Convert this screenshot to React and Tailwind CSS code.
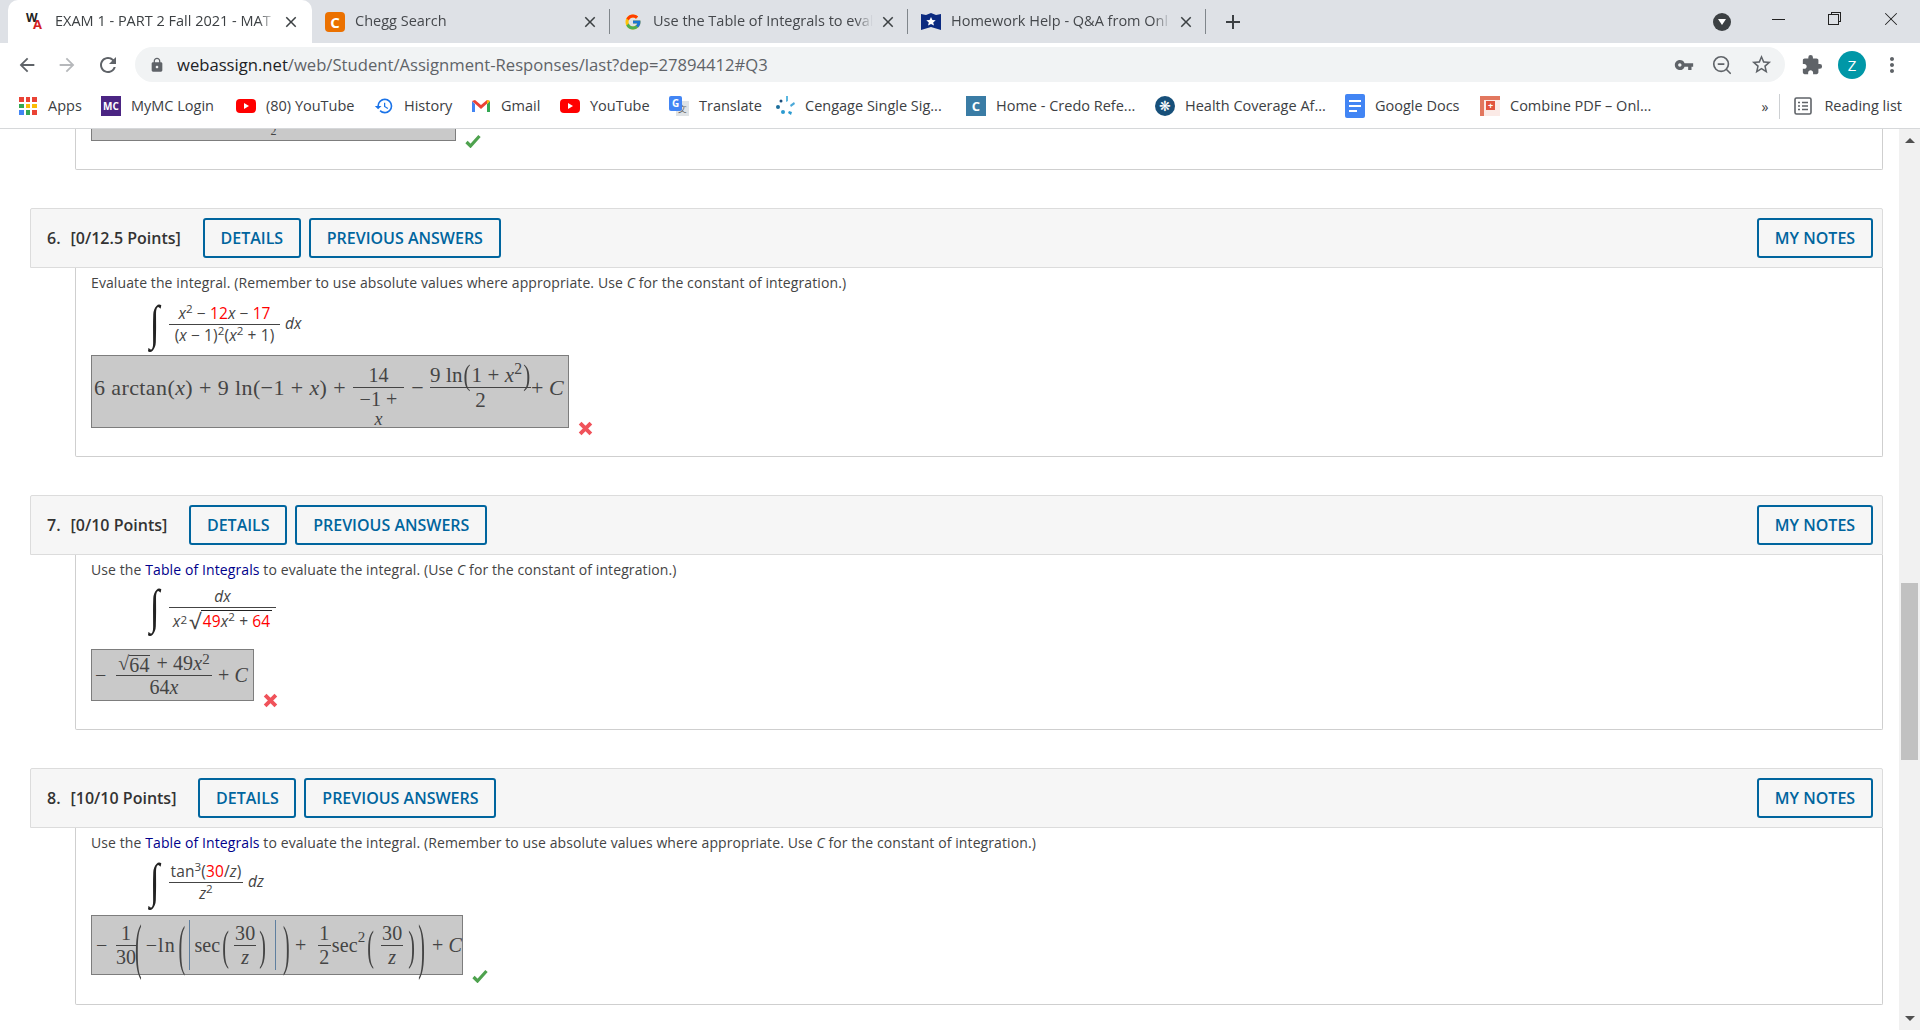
import { X, ZoomOut } from 'lucide-react';
import { FcGoogle } from 'react-icons/fc';
import {
  MdAdd,
  MdArrowBack,
  MdArrowForward,
  MdClose,
  MdExtension,
  MdHistory,
  MdLock,
  MdMoreVert,
  MdOutlineStarBorder,
  MdRefresh,
  MdVpnKey,
} from 'react-icons/md';

const YouTubeIcon = () => (
  <svg viewBox="0 0 20 20" className="w-5 h-5">
    <rect x="0" y="3" width="20" height="14" rx="4" fill="#ff0000" />
    <path d="M8 7l5 3-5 3z" fill="#fff" />
  </svg>
);

const AppsIcon = () => (
  <div className="w-[18px] h-[18px] grid grid-cols-3 gap-[2px]">
    {['#ea4335', '#ea4335', '#ea4335', '#34a853', '#fbbc04', '#fbbc04', '#4285f4', '#34a853', '#ea4335'].map((c, i) => (
      <span key={i} style={{ background: c }} />
    ))}
  </div>
);

const GmailIcon = () => (
  <svg viewBox="0 0 20 20" className="w-5 h-5">
    <path d="M1 5v11h3V8z" fill="#4285f4" />
    <path d="M19 5v11h-3V8z" fill="#34a853" />
    <path d="M1 5l3-1 6 5 6-5 3 1-9 8z" fill="#ea4335" />
    <path d="M16 4l3 1-3 3z" fill="#fbbc04" />
  </svg>
);

const TranslateIcon = () => (
  <div className="relative w-5 h-5">
    <div className="absolute right-0 bottom-0 w-[13px] h-[15px] bg-[#dfe3e6] text-[9px] leading-[15px] text-center text-[#666]">文</div>
    <div className="absolute left-0 top-0 w-[13px] h-[15px] bg-[#4285f4] rounded-[2px] text-[10px] font-bold leading-[15px] text-center text-white">G</div>
  </div>
);

const CengageIcon = () => (
  <svg viewBox="0 0 20 20" className="w-5 h-5">
    <circle cx="3" cy="11" r="2" fill="#1d6f9c" />
    <circle cx="6" cy="5" r="1.5" fill="#1d4f7c" />
    <path d="M11 0l2 0 0 5-2 1z" fill="#5bb7e0" />
    <path d="M15 9l4-3 1 2-4 3z" fill="#4aa8d8" />
    <path d="M14 15l3 1-1 3-3-2z" fill="#2b9ad0" />
    <circle cx="8" cy="16" r="2" fill="#2b9ad0" />
  </svg>
);

const CredoIcon = () => (
  <div className="w-5 h-5 bg-[#3a7ca5] text-white text-[13px] font-bold leading-5 text-center">C</div>
);

const HealthIcon = () => (
  <div className="w-5 h-5 rounded-full bg-[#17507a] text-white text-[14px] leading-5 text-center">❋</div>
);

const DocsIcon = () => (
  <div className="w-5 h-6 bg-[#4285f4] rounded-[2px] flex flex-col justify-center gap-[3px] px-1">
    <span className="h-[2px] bg-white" />
    <span className="h-[2px] bg-white" />
    <span className="h-[2px] w-2 bg-white" />
  </div>
);

const PdfIcon = () => (
  <div className="relative w-5 h-5 bg-[#fbeae6] border-l-[4px] border-t-[4px] border-[#e2775f]">
    <div className="w-[9px] h-[9px] mt-[1px] ml-[2px] bg-[#e2553f] text-white text-[9px] font-bold leading-[9px] text-center">+</div>
  </div>
);

const ReadingIcon = () => (
  <svg viewBox="0 0 18 18" className="w-[18px] h-[18px]" fill="none" stroke="#5f6368" strokeWidth="1.6">
    <rect x="1" y="1" width="16" height="16" rx="1.5" />
    <path d="M4 5.5h2M8 5.5h6M4 9h2M8 9h6M4 12.5h2M8 12.5h6" />
  </svg>
);

const bookmarks = [
  { icon: <AppsIcon />, label: 'Apps', w: 'w-[33px]' },
  { icon: <div className="w-5 h-5 bg-[#4b2583] text-white text-[10px] font-bold leading-5 text-center">MC</div>, label: 'MyMC Login', w: 'w-[85px]' },
  { icon: <YouTubeIcon />, label: '(80) YouTube', w: 'w-[88px]' },
  { icon: <MdHistory className="w-5 h-5 text-[#1a73e8]" />, label: 'History', w: 'w-[47px]' },
  { icon: <GmailIcon />, label: 'Gmail', w: 'w-[39px]' },
  { icon: <YouTubeIcon />, label: 'YouTube', w: 'w-[59px]' },
  { icon: <TranslateIcon />, label: 'Translate', w: 'w-[56px]' },
  { icon: <CengageIcon />, label: 'Cengage Single Sig...', w: 'w-[141px]' },
  { icon: <CredoIcon />, label: 'Home - Credo Refe...', w: 'w-[139px]' },
  { icon: <HealthIcon />, label: 'Health Coverage Af...', w: 'w-[140px]' },
  { icon: <DocsIcon />, label: 'Google Docs', w: 'w-[85px]' },
  { icon: <PdfIcon />, label: 'Combine PDF – Onl...', w: 'w-[141px]' },
];

function Tab({ icon, title, active, sep }) {
  return (
    <div className={`relative h-[43px] flex items-center shrink-0 text-[14.5px] ${active ? 'w-[304px] pl-[18px] pr-[12px] bg-white rounded-t-[10px] text-[#3c4043]' : 'w-[298px] pl-[13px] pr-[11px] text-[#45484c]'}`}>
      <div className="w-5 h-5 shrink-0 flex items-center justify-center">{icon}</div>
      <div className={`flex-1 mb-[1px] whitespace-nowrap overflow-hidden [mask-image:linear-gradient(to_right,black_92%,transparent)] ${active ? 'ml-[9px]' : 'ml-[10px]'}`}>{title}</div>
      <MdClose className="w-[18px] h-[18px] ml-[6px] shrink-0 text-[#3c4043]" />
      {sep && <div className="absolute right-0 top-[9px] w-px h-[25px] bg-[#80868b]" />}
    </div>
  );
}

function TabBar() {
  return (
    <div className="h-[43px] bg-[#dee1e6] flex pl-2 overflow-hidden">
      <Tab
        active
        title="EXAM 1 - PART 2 Fall 2021 - MAT"
        icon={
          <div className="relative w-5 h-5 font-bold leading-none">
            <span className="absolute left-0 top-0 text-[12px] text-[#222]">W</span>
            <span className="absolute left-[7px] top-[6px] text-[13px] text-[#d3201f]">A</span>
          </div>
        }
      />
      <Tab
        sep
        title="Chegg Search"
        icon={<div className="w-5 h-5 rounded-[4px] bg-[#eb7100] text-white text-[15px] font-bold leading-5 text-center">C</div>}
      />
      <Tab sep title="Use the Table of Integrals to eval" icon={<FcGoogle className="w-[18px] h-[18px]" />} />
      <Tab
        sep
        title="Homework Help - Q&A from Onl"
        icon={
          <svg viewBox="0 0 20 20" className="w-5 h-5">
            <path d="M0 2l5 1 5-2 5 2 5-1v16l-10-3-10 3z" fill="#0b2a80" />
            <path d="M10 5l1.4 3 3.3.3-2.5 2.1.8 3.2-3-1.7-3 1.7.8-3.2-2.5-2.1 3.3-.3z" fill="#fff" />
          </svg>
        }
      />
      <div className="flex items-center ml-[15px]">
        <MdAdd className="w-[24px] h-[24px] text-[#3c4043]" />
      </div>
      <div className="flex-1" />
      <div className="flex items-center">
        <div className="w-[18px] h-[18px] mt-[1px] rounded-full bg-[#3c4043] flex items-center justify-center">
          <div className="w-0 h-0 border-x-[4px] border-x-transparent border-t-[6px] border-t-white" />
        </div>
        <div className="w-[56px] h-[43px] ml-[19px] flex items-center justify-center">
          <div className="w-[13px] h-px mb-[4px] bg-[#222]" />
        </div>
        <div className="w-[56px] h-[43px] flex items-center justify-center">
          <div className="relative w-[13px] h-[13px] mb-[6px]">
            <div className="absolute left-[3px] top-0 w-[10px] h-[10px] border border-[#222]" />
            <div className="absolute left-0 top-[2px] w-[11px] h-[11px] border border-[#222] bg-[#dee1e6]" />
          </div>
        </div>
        <div className="w-[58px] h-[43px] flex items-center justify-center">
          <X className="w-[22px] h-[22px] mb-[6px] text-[#222]" strokeWidth={1.1} />
        </div>
      </div>
    </div>
  );
}

function Toolbar() {
  return (
    <div className="h-[43px] bg-white flex items-center">
      <MdArrowBack className="w-[22px] h-[22px] ml-[16px] text-[#5f6368]" />
      <MdArrowForward className="w-[22px] h-[22px] ml-[18px] text-[#b6b8bb]" />
      <MdRefresh className="w-[24px] h-[24px] ml-[18px] text-[#5f6368]" />
      <div className="w-[1650px] h-[35px] ml-[15px] pl-[14px] pr-[12px] rounded-full bg-[#f1f3f4] flex items-center text-[16.65px]">
        <MdLock className="w-[16px] h-[16px] text-[#5f6368]" />
        <div className="ml-[12px] mt-[1px] whitespace-nowrap text-[#5f6368]">
          <span className="text-[#202124]">webassign.net</span>/web/Student/Assignment-Responses/last?dep=27894412#Q3
        </div>
        <div className="flex-1" />
        <MdVpnKey className="w-[20px] h-[20px] mr-[17px] text-[#5f6368]" />
        <ZoomOut className="w-[22px] h-[22px] mr-[17px] text-[#5f6368]" strokeWidth={1.8} />
        <MdOutlineStarBorder className="w-[23px] h-[23px] text-[#5f6368]" />
      </div>
      <MdExtension className="w-[22px] h-[22px] ml-[16px] text-[#5f6368]" />
      <div className="w-[28px] h-[28px] ml-[15px] rounded-full bg-[#0097a7] text-white text-[15px] leading-[28px] text-center">Z</div>
      <MdMoreVert className="w-[24px] h-[24px] ml-[14px] text-[#5f6368]" />
    </div>
  );
}

function BookmarkBar() {
  return (
    <div className="h-[43px] pb-[2px] bg-white border-b border-[#d6d8da] flex items-center pl-[18px] text-[14.5px] text-[#3c4043]">
      {bookmarks.map((b) => (
        <div key={b.label} className="flex items-center mr-[20px] shrink-0">
          <div className="w-5 flex items-center justify-center">{b.icon}</div>
          <div className={`ml-[10px] mb-[1px] whitespace-nowrap ${b.w}`}>{b.label}</div>
        </div>
      ))}
      <div className="flex-1" />
      <div className="text-[14px] mr-[11px]">»</div>
      <div className="w-px h-[25px] bg-[#cdd0d3] mr-[14px]" />
      <ReadingIcon />
      <div className="ml-[12px] mr-[18px]">Reading list</div>
    </div>
  );
}

const Button = ({ children, w }) => (
  <button className={`h-[40px] ${w} border-2 border-[#00659e] rounded-[3px] text-[#00659e] text-[16px] font-semibold leading-none`}>
    {children}
  </button>
);

function QuestionHeader({ num, points }) {
  return (
    <div className="h-[60px] bg-[#f6f6f6] border border-[#dcdcdc] rounded-t-[2px] flex items-center pl-[16px] pr-[9px] text-[#333] text-[16px] font-semibold">
      <span className="mr-[10px]">{num}.</span>
      <span className="mr-[22px] whitespace-nowrap">[{points} Points]</span>
      <Button w="w-[98px]">DETAILS</Button>
      <div className="w-[8px]" />
      <Button w="w-[192px]">PREVIOUS ANSWERS</Button>
      <div className="flex-1" />
      <Button w="w-[116px]">MY NOTES</Button>
    </div>
  );
}

// fraction with the bar on the middle line of the block
const Frac = ({ top, bottom, className = '', lead = 'leading-[1.15]' }) => (
  <span className={`inline-grid grid-rows-[1fr_auto_1fr] justify-items-center shrink-0 ${className}`}>
    <span className={`self-end whitespace-nowrap ${lead}`}>{top}</span>
    <span className="w-full h-px bg-current" />
    <span className={`self-start whitespace-nowrap ${lead}`}>{bottom}</span>
  </span>
);

const Red = ({ children }) => <span className="text-[#f00]">{children}</span>;
const Sup = ({ children }) => <sup className="text-[0.75em] leading-none -top-[0.5em]">{children}</sup>;

const Integral = ({ children, className }) => (
  <div className={`flex items-center text-[15.5px] text-[#444] ml-[57px] ${className}`}>
    <span className="w-[21px] text-[44px] leading-none font-['Liberation_Serif',serif] text-[#222] scale-x-[0.8] scale-y-[1.1]">∫</span>
    {children}
  </div>
);

const Paren = ({ children, className }) => (
  <span className={`inline-block font-extralight origin-center ${className}`}>{children}</span>
);

function Check({ className }) {
  return (
    <svg viewBox="0 0 16 14" className={`w-[16px] h-[14px] shrink-0 ${className}`}>
      <path d="M1.5 8l4 4L14.5 2" fill="none" stroke="#4ea24e" strokeWidth="3.2" />
    </svg>
  );
}

function Cross({ className }) {
  return (
    <svg viewBox="0 0 14 14" className={`w-[15px] h-[15px] shrink-0 ${className}`}>
      <path d="M2 2l10 10M12 2L2 12" fill="none" stroke="#f0525a" strokeWidth="3.6" />
    </svg>
  );
}

const Answer = ({ className, children }) => (
  <div className={`bg-[#c9c9c9] border border-[#7d7d7d] font-['Liberation_Serif',serif] text-[#444] shrink-0 ${className}`}>{children}</div>
);

function Answer6() {
  return (
    <div className="flex items-end mt-[10px]">
      <Answer className="w-[478px] h-[73px] pl-[2px] text-[22px]">
        <div className="h-[63px] flex items-center whitespace-nowrap">
          <span className="w-[259px] tracking-[0.4px]">6 arctan(<i>x</i>) + 9 ln(−1 + <i>x</i>) +</span>
          <Frac
            className="w-[51px] text-[20px] text-[#444]"
            top="14"
            bottom={
              <span className="flex flex-col items-center">
                <span>−1 +</span>
                <i className="-mt-[2px] text-[18px] leading-[20px]">x</i>
              </span>
            }
          />
          <span className="w-[25px] ml-[1px] text-center">−</span>
          <Frac
            className="w-[97px] text-[21px]"
            top={
              <>
                9 ln<Paren className="scale-y-[1.4] mx-[1px]">(</Paren>1 + <i>x</i>
                <Sup>2</Sup>
                <Paren className="scale-y-[1.4] mx-[1px]">)</Paren>
              </>
            }
            bottom="2"
          />
          <span className="ml-[4px]">+ <i>C</i></span>
        </div>
      </Answer>
      <Cross className="ml-[9px] -mb-[8px]" />
    </div>
  );
}

function Answer7() {
  return (
    <div className="flex items-end mt-[20px]">
      <Answer className="w-[163px] h-[52px] pl-[3px] text-[20px]">
        <div className="h-[50px] flex items-center whitespace-nowrap">
          <span className="w-[21px]">−</span>
          <Frac
            className="w-[96px]"
            top={
              <span className="inline-flex items-end">
                <span>√</span>
                <span className="border-t border-[#444] leading-[19px] mr-[7px]">64</span>
                <span>+ 49<i>x</i></span>
                <Sup>2</Sup>
              </span>
            }
            bottom={<>64<i>x</i></>}
          />
          <span className="ml-[6px]">+ <i>C</i></span>
        </div>
      </Answer>
      <Cross className="ml-[9px] -mb-[7px]" />
    </div>
  );
}

function Answer8() {
  return (
    <div className="flex items-end mt-[12px]">
      <Answer className="w-[372px] h-[60px] pl-[4px] text-[20px]">
        <div className="h-[58px] flex items-center whitespace-nowrap">
          <span className="w-[20px]">−</span>
          <Frac className="w-[19px]" top="1" bottom="30" />
          <Paren className="w-[11px] scale-y-[3.1]">(</Paren>
          <span className="w-[33px] tracking-[1px]">−ln</span>
          <Paren className="w-[10px] scale-y-[2.7]">(</Paren>
          <span className="w-[6px] h-[50px] border-l border-[#5f7f9f]" />
          <span className="w-[28px]">sec</span>
          <Paren className="w-[12px] scale-y-[2.1]">(</Paren>
          <Frac className="w-[22px]" top="30" bottom={<i>z</i>} />
          <Paren className="w-[16px] ml-[3px] scale-y-[2.1]">)</Paren>
          <span className="w-[8px] h-[50px] border-l border-[#5f7f9f]" />
          <Paren className="w-[12px] scale-y-[2.7]">)</Paren>
          <span className="w-[23px]">+</span>
          <Frac className="w-[13px]" top="1" bottom="2" />
          <span className="ml-[1px]">sec</span>
          <Sup>2</Sup>
          <Paren className="w-[14px] ml-[2px] scale-y-[2.1]">(</Paren>
          <Frac className="w-[22px]" top="30" bottom={<i>z</i>} />
          <Paren className="w-[10px] ml-[5px] scale-y-[2.1]">)</Paren>
          <Paren className="w-[13px] scale-y-[3.1]">)</Paren>
          <span className="ml-[1px]">+ <i>C</i></span>
        </div>
      </Answer>
      <Check className="ml-[9px] -mb-[8px]" />
    </div>
  );
}

const Body = ({ className, children }) => (
  <div className={`ml-[45px] px-[15px] border-x border-b border-[#cfcfcf] rounded-b-[2px] text-[14px] tracking-[0.1px] text-[#444] ${className}`}>{children}</div>
);

const TableLink = () => <a className="text-[#00008b]">Table of Integrals</a>;

export default function App() {
  return (
    <div className="w-[1920px] h-[1030px] overflow-hidden bg-white font-['Open_Sans',sans-serif] flex flex-col">
      <TabBar />
      <Toolbar />
      <BookmarkBar />
      <div className="flex-1 min-h-0 flex">
        <div className="flex-1 pl-[30px] pr-[16px] flex flex-col gap-[38px]">
          {/* question 5, only its end is on screen */}
          <Body className="h-[41px]">
            <div className="flex items-start">
              <div className="w-[365px] h-[12px] bg-[#c9c9c9] border border-[#7d7d7d] border-t-0 text-center text-[12px] leading-[4px] text-[#444] overflow-hidden font-['Liberation_Serif',serif]">
                2
              </div>
              <Check className="ml-[9px] mt-[5px]" />
            </div>
          </Body>

          <section>
            <QuestionHeader num="6" points="0/12.5" />
            <Body className="h-[189px]">
              <p className="pt-[5px] leading-[20px]">
                Evaluate the integral. (Remember to use absolute values where appropriate. Use <i>C</i> for the constant of integration.)
              </p>
              <Integral className="h-[42px] mt-[10px]">
                <Frac
                  lead="leading-[1.35]"
                  className="w-[111px] text-[#444]"
                  top={<><i>x</i><Sup>2</Sup> − <Red>12</Red><i>x</i> − <Red>17</Red></>}
                  bottom={<>(<i>x</i> − 1)<Sup>2</Sup>(<i>x</i><Sup>2</Sup> + 1)</>}
                />
                <i className="ml-[5px]">dx</i>
              </Integral>
              <Answer6 />
            </Body>
          </section>

          <section>
            <QuestionHeader num="7" points="0/10" />
            <Body className="h-[175px]">
              <p className="pt-[5px] leading-[20px]">
                Use the <TableLink /> to evaluate the integral. (Use <i>C</i> for the constant of integration.)
              </p>
              <Integral className="h-[43px] mt-[6px]">
                <Frac
                  lead="leading-[1.35]"
                  className="w-[107px]"
                  top={<i>dx</i>}
                  bottom={
                    <span className="inline-flex items-end mt-[2px]">
                      <i>x</i><Sup>2</Sup>
                      <span className="text-[21px] leading-none ml-[2px]">√</span>
                      <span className="border-t border-[#222] px-[2px]"><Red>49</Red><i>x</i><Sup>2</Sup> + <Red>64</Red></span>
                    </span>
                  }
                />
              </Integral>
              <Answer7 />
            </Body>
          </section>

          <section>
            <QuestionHeader num="8" points="10/10" />
            <Body className="h-[177px]">
              <p className="pt-[5px] leading-[20px]">
                Use the <TableLink /> to evaluate the integral. (Remember to use absolute values where appropriate. Use <i>C</i> for the constant of integration.)
              </p>
              <Integral className="h-[42px] mt-[8px]">
                <Frac
                  lead="leading-[1.35]"
                  className="w-[74px]"
                  top={<>tan<Sup>3</Sup>(<Red>30</Red>/<i>z</i>)</>}
                  bottom={<><i>z</i><Sup>2</Sup></>}
                />
                <i className="ml-[5px]">dz</i>
              </Integral>
              <Answer8 />
            </Body>
          </section>
        </div>

        <div className="w-[21px] bg-[#f1f1f1] flex flex-col items-center relative">
          <div className="h-[23px] flex items-center justify-center">
            <div className="w-0 h-0 border-x-[5px] border-x-transparent border-b-[5px] border-b-[#505050]" />
          </div>
          <div className="w-[17px] h-[177px] mt-[431px] bg-[#c1c1c1]" />
          <div className="flex-1" />
          <div className="h-[23px] flex items-center justify-center">
            <div className="w-0 h-0 border-x-[5px] border-x-transparent border-t-[5px] border-t-[#505050]" />
          </div>
        </div>
      </div>
    </div>
  );
}
